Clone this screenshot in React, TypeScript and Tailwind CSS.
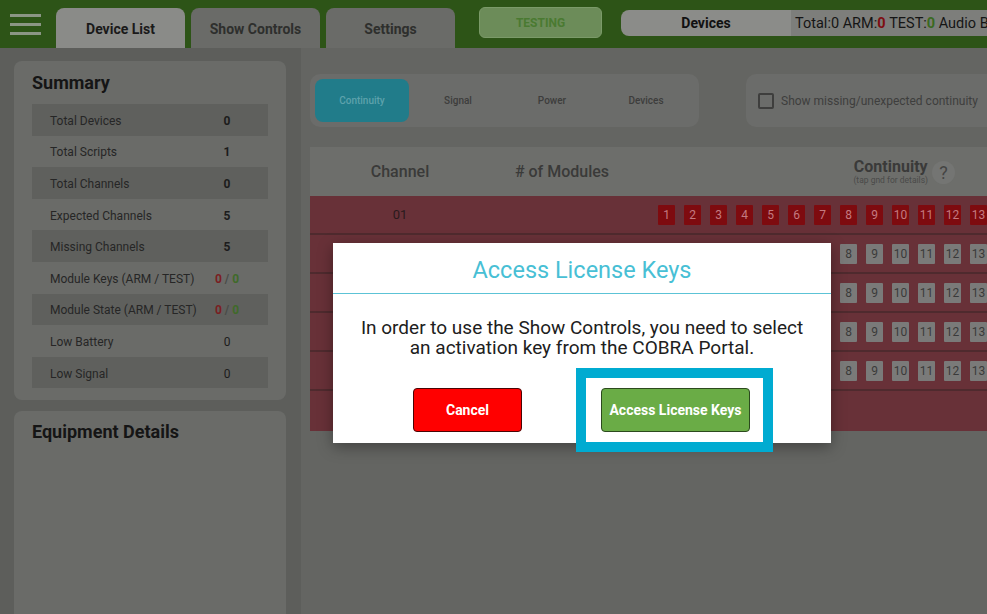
import React from "react";

const summaryRows: { label: string; value: React.ReactNode; bold?: boolean }[] = [
  { label: "Total Devices", value: "0", bold: true },
  { label: "Total Scripts", value: "1", bold: true },
  { label: "Total Channels", value: "0", bold: true },
  { label: "Expected Channels", value: "5", bold: true },
  { label: "Missing Channels", value: "5", bold: true },
  {
    label: "Module Keys (ARM / TEST)",
    value: (
      <>
        <span className="text-[#7a1e22]">0</span>
        <span className="text-[#4a4b48]"> / </span>
        <span className="text-[#3f6a2a]">0</span>
      </>
    ),
    bold: true,
  },
  {
    label: "Module State (ARM / TEST)",
    value: (
      <>
        <span className="text-[#7a1e22]">0</span>
        <span className="text-[#4a4b48]"> / </span>
        <span className="text-[#3f6a2a]">0</span>
      </>
    ),
    bold: true,
  },
  { label: "Low Battery", value: "0" },
  { label: "Low Signal", value: "0" },
];

const boxes = Array.from({ length: 13 }, (_, i) => i + 1);

// boxes 1-7 of the lower rows sit under the dialog, so they carry no label
function Boxes({ red }: { red: boolean }) {
  return (
    <div className="flex gap-[9px] pl-[24px]">
      {boxes.map((n) => (
        <div
          key={n}
          className={
            red
              ? "w-[17px] h-[20px] shrink-0 rounded-[1px] bg-[#7e0b0f] text-[#c47a80] text-[12px] flex items-center justify-center"
              : "w-[17px] h-[20px] shrink-0 rounded-[1px] bg-[#7a7a79] text-[#3a3a3a] text-[12px] flex items-center justify-center"
          }
        >
          {red || n >= 8 ? n : ""}
        </div>
      ))}
    </div>
  );
}

export default function App() {
  return (
    <div className="relative w-[987px] h-[614px] overflow-hidden bg-[#646562] font-['Roboto',sans-serif]">
      {/* Top bar */}
      <div className="h-[48px] bg-[#2d5417] flex items-end">
        <div className="w-[56px] h-[48px] flex flex-col justify-center gap-[6px] pl-[10px]">
          <div className="w-[31px] h-[3px] bg-[#8b9685]" />
          <div className="w-[31px] h-[3px] bg-[#8b9685]" />
          <div className="w-[31px] h-[3px] bg-[#8b9685]" />
        </div>
        <div className="flex gap-[6px] h-[40px]">
          <div className="w-[129px] rounded-t-[8px] bg-[#8a8b88] flex items-center justify-center pt-[2px] text-[14px] font-bold text-[#1a1a1a]">
            Device List
          </div>
          <div className="w-[129px] rounded-t-[8px] bg-[#6a6b68] flex items-center justify-center pt-[2px] text-[14px] font-bold text-[#2e2f2d]">
            Show Controls
          </div>
          <div className="w-[129px] rounded-t-[8px] bg-[#6a6b68] flex items-center justify-center pt-[2px] text-[14px] font-bold text-[#2e2f2d]">
            Settings
          </div>
        </div>
        <div className="self-start mt-[7px] ml-[24px] w-[123px] h-[31px] rounded-[6px] bg-[#6c8c59] border border-[#7b9a69] flex items-center justify-center text-[12px] font-bold text-[#4a7a31]">
          TESTING
        </div>
        <div className="self-start mt-[10px] ml-[19px] flex-1 h-[26px] flex rounded-l-[8px] overflow-hidden">
          <div className="w-[170px] shrink-0 bg-[#8b8c89] flex items-center justify-center pt-[1px] text-[14px] font-bold text-[#111]">
            Devices
          </div>
          <div className="flex-1 bg-[#7d7e7b] flex items-center pl-[4px] pt-[1px] text-[14.5px] text-[#151515] whitespace-nowrap">
            Total:0 ARM:<span className="text-[#7e0e12] font-bold">0</span>&nbsp;TEST:
            <span className="text-[#3a6a22] font-bold">0</span>&nbsp;Audio Box
          </div>
        </div>
      </div>

      <div className="flex h-[566px]">
        {/* Left column */}
        <div className="w-[301px] bg-[#5d5e5b] pl-[14px] pr-[15px] pt-[13px] flex flex-col gap-[11px]">
          <div className="rounded-[8px] bg-[#6a6b68] pt-[12px] pb-[12px] px-[18px]">
            <div className="text-[18px] font-bold text-[#151515] leading-[20px] mb-[11px]">Summary</div>
            {summaryRows.map((r, i) => (
              <div
                key={r.label}
                className={
                  i % 2 === 0
                    ? "h-[31.6px] bg-[#5f605d] flex items-center pt-[2px] text-[12px] text-[#262626]"
                    : "h-[31.6px] flex items-center pt-[2px] text-[12px] text-[#262626]"
                }
              >
                <div className="w-[165px] pl-[18px] whitespace-nowrap">{r.label}</div>
                <div className={r.bold ? "w-[60px] text-center font-bold text-[#1c1c1c]" : "w-[60px] text-center text-[#1c1c1c]"}>
                  {r.value}
                </div>
              </div>
            ))}
          </div>
          <div className="flex-1 rounded-t-[8px] bg-[#6a6b68] pt-[11px] px-[18px]">
            <div className="text-[18px] font-bold text-[#151515] leading-[20px]">Equipment Details</div>
          </div>
        </div>

        {/* Right column */}
        <div className="flex-1 pl-[9px] pt-[26px]">
          <div className="flex">
            <div className="w-[389px] h-[53px] rounded-[10px] bg-[#6b6c6a] flex items-center pl-[5px]">
              <div className="w-[94px] h-[43px] rounded-[8px] bg-[#217c8a] flex items-center justify-center text-[10px] font-medium text-[#5ea2ac]">
                Continuity
              </div>
              <div className="w-[94px] pl-[4px] text-center text-[10px] font-medium text-[#3d3d3c]">Signal</div>
              <div className="w-[94px] pl-[4px] text-center text-[10px] font-medium text-[#3d3d3c]">Power</div>
              <div className="w-[94px] pl-[4px] text-center text-[10px] font-medium text-[#3d3d3c]">Devices</div>
            </div>
            <div className="ml-[47px] flex-1 h-[53px] rounded-l-[10px] bg-[#6b6c6a] flex items-center pl-[12px] gap-[7px]">
              <div className="w-[16px] h-[16px] border-2 border-[#3e3e3d] rounded-[2px]" />
              <div className="text-[12px] text-[#3e3e3d] whitespace-nowrap">Show missing/unexpected continuity</div>
            </div>
          </div>

          <div className="mt-[20px]">
            <div className="h-[49px] bg-[#6d6e6b] flex items-center pt-[1px]">
              <div className="w-[180px] text-center text-[16px] font-medium text-[#3a3a39]">Channel</div>
              <div className="w-[144px] text-center text-[16px] font-medium text-[#3a3a39]">
                # of Modules
              </div>
              <div className="flex-1 flex items-center justify-end pr-[32px] gap-[4px]">
                <div className="flex flex-col items-center">
                  <div className="text-[16px] font-bold text-[#3a3a39] leading-[17px]">Continuity</div>
                  <div className="text-[8.5px] text-[#4a4a49] leading-[11px]">(tap gnd for details)</div>
                </div>
                <div className="w-[23px] h-[23px] rounded-full bg-[#747573] flex items-center justify-center text-[18px] text-[#444443]">
                  ?
                </div>
              </div>
            </div>
            {[0, 1, 2, 3, 4].map((r) => (
              <div key={r} className="h-[39px] bg-[#683138] border-b-2 border-[#4f2a2e] flex items-center pt-[1px] overflow-hidden">
                <div className="w-[180px] shrink-0 text-center text-[13px] text-[#2a1a1c]">
                  {r === 0 ? "01" : ""}
                </div>
                <div className="w-[144px] shrink-0" />
                <Boxes red={r === 0} />
              </div>
            ))}
            <div className="h-[40px] bg-[#683138]" />
          </div>
        </div>
      </div>

      {/* Modal */}
      <div className="absolute left-[333px] top-[243px] w-[498px] h-[200px] bg-white shadow-[0_4px_14px_rgba(0,0,0,0.35)] flex flex-col">
        <div className="shrink-0 h-[51px] flex items-center justify-center pt-[5px] text-[23.5px] text-[#48bfd5] border-b border-[#5cc3d6]">
          Access License Keys
        </div>
        <div className="shrink-0 mt-[24px] text-center text-[19px] text-[#202020]">
          <div className="leading-[20px]">In order to use the Show Controls, you need to select</div>
          <div className="leading-[20px]">an activation key from the COBRA Portal.</div>
        </div>
        <div className="shrink-0 mt-[10px] flex items-start pl-[80px]">
          <button className="mt-[20px] w-[109px] h-[44px] rounded-[4px] bg-[#ff0000] border border-[#4a0505] text-white text-[14px] font-bold">
            Cancel
          </button>
          <div className="ml-[54px] w-[197px] h-[84px] shrink-0 border-[10px] border-[#00abd1] bg-white px-[15px] py-[10px]">
            <button className="w-[149px] h-[44px] rounded-[4px] bg-[#6aac46] border border-[#2c4a1e] text-white text-[14px] font-bold">
              Access License Keys
            </button>
          </div>
        </div>
      </div>
    </div>
  );
}
